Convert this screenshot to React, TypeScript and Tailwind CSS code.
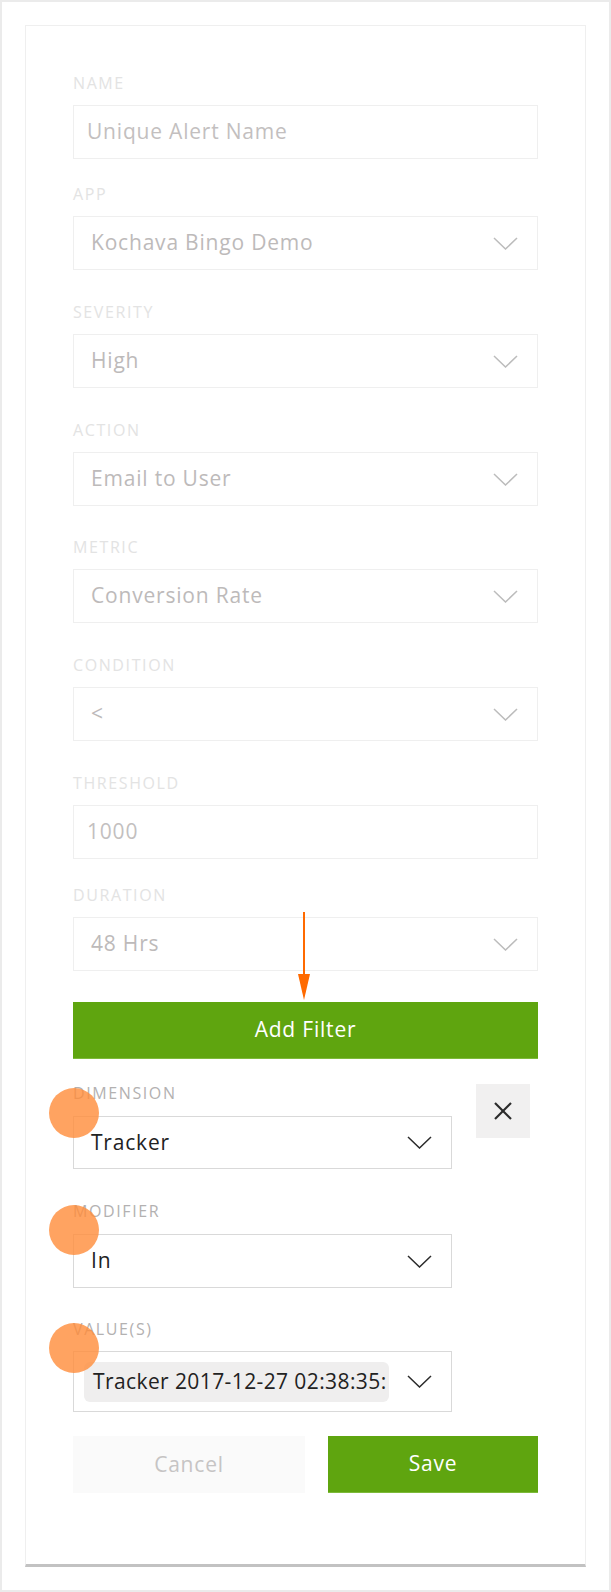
import React from "react";

const FONT = { fontFamily: '"Open Sans", "Noto Sans", Arial, sans-serif' };

function Chevron({ color }: { color: string }) {
  return (
    <svg width="25" height="13" viewBox="0 0 25 13" fill="none">
      <polyline points="1,1 12.5,12 24,1" stroke={color} strokeWidth="1.5" fill="none" />
    </svg>
  );
}

function Label({ text, dark }: { text: string; dark?: boolean }) {
  return (
    <div
      className={`h-[20px] text-[16px] leading-[20px] tracking-[1.6px] ${dark ? "text-[#b3b1b1]" : "text-[#e3e3e3]"}`}
    >
      {text}
    </div>
  );
}

function TextField({ label, value, mb }: { label: string; value: string; mb: string }) {
  return (
    <div className={mb}>
      <Label text={label} />
      <div className="mt-[12px] h-[54px] border border-[#efefef] flex items-center pl-[13px] text-[21px] text-[#c3bfbf] tracking-[0.8px]">
        {value}
      </div>
    </div>
  );
}

function SelectField({ label, value, mb }: { label: string; value: string; mb: string }) {
  return (
    <div className={mb}>
      <Label text={label} />
      <div className="mt-[12px] h-[54px] border border-[#efefef] flex items-center justify-between pl-[17px] pr-[19px] text-[21px] text-[#bdbaba] tracking-[0.8px]">
        <span>{value}</span>
        <Chevron color="#bcbcbc" />
      </div>
    </div>
  );
}

function Dot({ top }: { top: string }) {
  return (
    <div
      className={`absolute left-[-25px] ${top} w-[50px] h-[50px] rounded-full bg-[#ff8c3a]/80 pointer-events-none`}
    />
  );
}

export default function App() {
  return (
    <div
      className="w-[611px] h-[1592px] border-2 border-[#ebebeb] bg-white pt-[23px] px-[23px] box-border"
      style={FONT}
    >
      <div className="relative border border-[#efefef] border-b-[3px] border-b-[#c2c2c2] pt-[47px] px-[47px] pb-[71px]">
        <TextField label="NAME" value="Unique Alert Name" mb="mb-[25px]" />
        <SelectField label="APP" value="Kochava Bingo Demo" mb="mb-[32px]" />
        <SelectField label="SEVERITY" value="High" mb="mb-[32px]" />
        <SelectField label="ACTION" value="Email to User" mb="mb-[31px]" />
        <SelectField label="METRIC" value="Conversion Rate" mb="mb-[32px]" />
        <SelectField label="CONDITION" value="<" mb="mb-[32px]" />
        <TextField label="THRESHOLD" value="1000" mb="mb-[26px]" />
        <SelectField label="DURATION" value="48 Hrs" mb="mb-[31px]" />

        <div className="relative">
          <div className="absolute left-[225px] top-[-90px] w-[12px] h-[88px] flex flex-col items-center pointer-events-none">
            <div className="w-[2px] flex-1 bg-[#ff6a00]" />
            <svg width="12" height="26" viewBox="0 0 12 26">
              <polygon points="0,0 12,0 6,26" fill="#ff6a00" />
            </svg>
          </div>
          <button className="w-full h-[57px] bg-[#5fa50f] border-b border-b-[#7dba3a] text-white text-[21px] tracking-[0.8px]">
            Add Filter
          </button>
        </div>

        <div className="mt-[24px] flex items-start gap-[24px]">
          <div className="flex-1">
            <Label text="DIMENSION" dark />
            <div className="relative mt-[13px] h-[53px] border border-[#d9d9d9] flex items-center justify-between pl-[17px] pr-[19px] text-[21px] text-[#222] tracking-[0.8px]">
              <Dot top="top-[-29px]" />
              <span>Tracker</span>
              <Chevron color="#2b2b2b" />
            </div>

            <div className="mt-[32px]">
              <Label text="MODIFIER" dark />
              <div className="relative mt-[13px] h-[54px] border border-[#d9d9d9] flex items-center justify-between pl-[17px] pr-[19px] text-[21px] text-[#222] tracking-[0.8px]">
                <Dot top="top-[-30px]" />
                <span>In</span>
                <Chevron color="#2b2b2b" />
              </div>
            </div>

            <div className="mt-[31px]">
              <Label text="VALUE(S)" dark />
              <div className="relative mt-[12px] h-[61px] border border-[#d9d9d9] flex items-center justify-between pl-[10px] pr-[19px]">
                <Dot top="top-[-29px]" />
                <div className="w-[305px] h-[40px] rounded-[6px] bg-[#efeeee] flex items-center pl-[9px] overflow-hidden whitespace-nowrap text-[21px] text-[#222] tracking-[0.4px]">
                  Tracker 2017-12-27 02:38:35:
                </div>
                <Chevron color="#2b2b2b" />
              </div>
            </div>
          </div>
          <button className="mt-[1px] mr-[8px] w-[54px] h-[54px] bg-[#f1f0f0] flex items-center justify-center shrink-0">
            <svg width="20" height="20" viewBox="0 0 20 20">
              <line x1="2" y1="2" x2="18" y2="18" stroke="#2b2b2b" strokeWidth="2.2" />
              <line x1="18" y1="2" x2="2" y2="18" stroke="#2b2b2b" strokeWidth="2.2" />
            </svg>
          </button>
        </div>

        <div className="mt-[24px] flex gap-[23px]">
          <button className="w-[232px] h-[57px] bg-[#fafafa] text-[#c6c4c4] text-[21px] tracking-[0.8px]">
            Cancel
          </button>
          <button className="flex-1 h-[57px] bg-[#5fa50f] border-b border-b-[#7dba3a] text-white text-[21px] tracking-[0.8px]">
            Save
          </button>
        </div>
      </div>
    </div>
  );
}
